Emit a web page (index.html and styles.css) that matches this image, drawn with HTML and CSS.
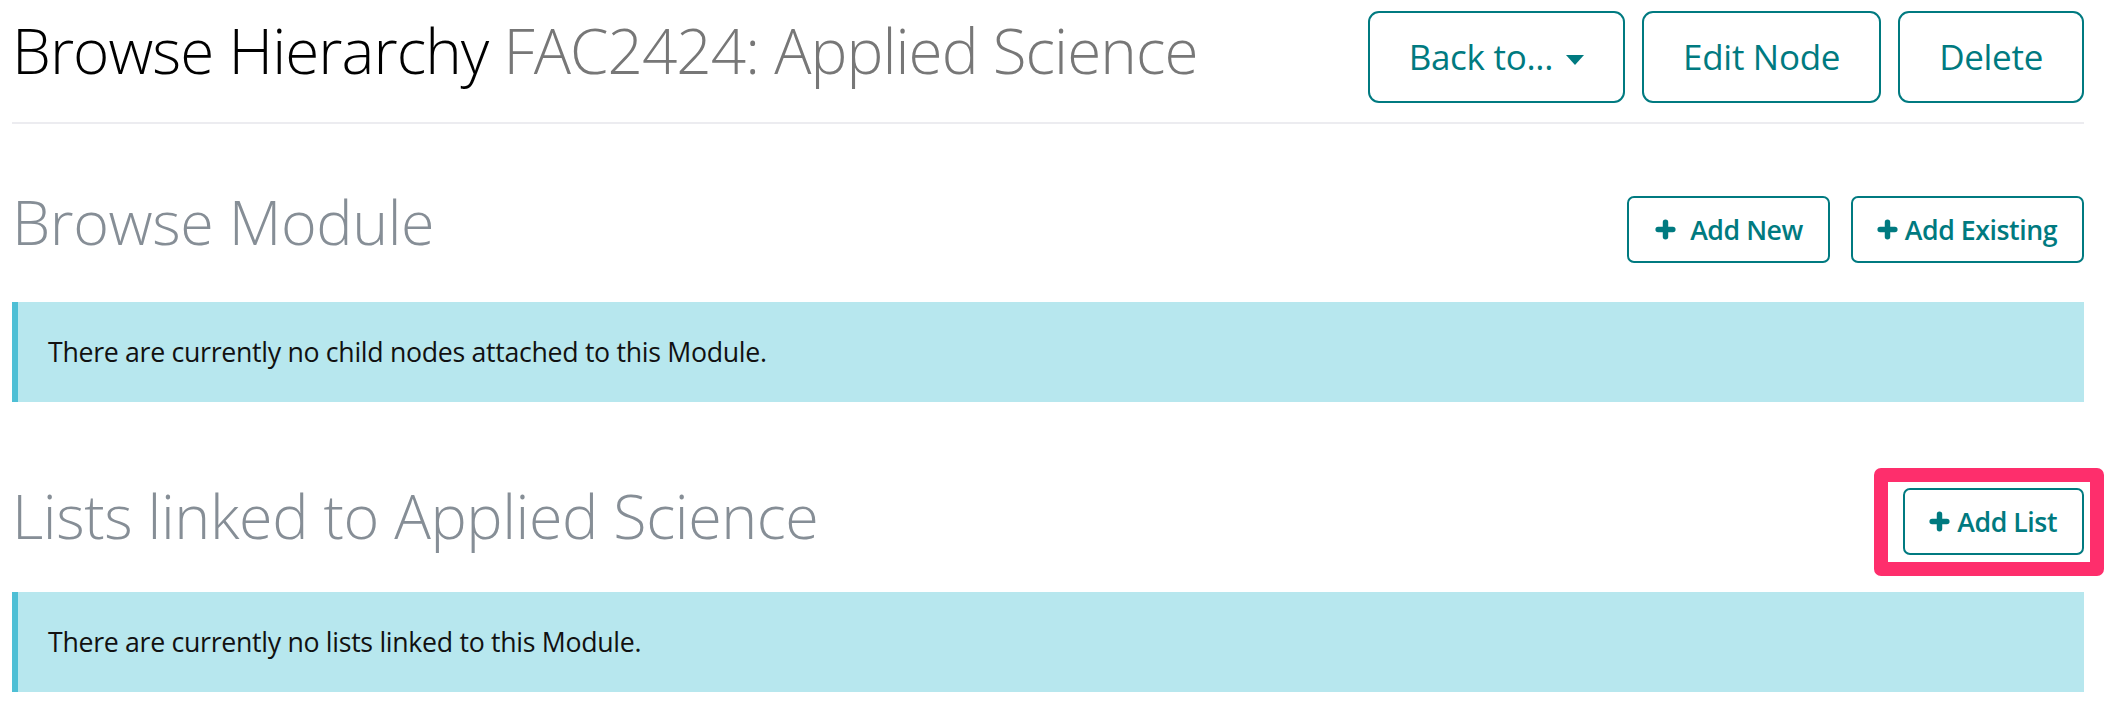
FILE: index.html
```html
<!DOCTYPE html>
<html lang="en">
<head>
<meta charset="utf-8">
<title>Browse Hierarchy</title>
<link rel="stylesheet" href="styles.css">
</head>
<body>
<div class="page">
  <header class="page-header">
    <h1 class="page-title">Browse Hierarchy <span class="subtitle">FAC2424: Applied Science</span></h1>
    <div class="btn-group">
      <button class="btn btn-lg">Back to... <span class="caret"></span></button>
      <button class="btn btn-lg">Edit Node</button>
      <button class="btn btn-lg">Delete</button>
    </div>
  </header>
  <hr class="divider">

  <section class="section section-first">
    <div class="section-head">
      <h2 class="section-title">Browse Module</h2>
      <div class="btn-group btn-group-sm">
        <button class="btn btn-sm btn-wide"><svg class="plus" viewBox="0 0 20 20"><path d="M10 3v14M3 10h14"/></svg>Add New</button>
        <button class="btn btn-sm"><svg class="plus" viewBox="0 0 20 20"><path d="M10 3v14M3 10h14"/></svg>Add Existing</button>
      </div>
    </div>
    <div class="alert">There are currently no child nodes attached to this Module.</div>
  </section>

  <section class="section section-second">
    <div class="section-head">
      <h2 class="section-title">Lists linked to Applied Science</h2>
      <div class="btn-group btn-group-sm">
        <span class="highlight-wrap">
          <button class="btn btn-sm"><svg class="plus" viewBox="0 0 20 20"><path d="M10 3v14M3 10h14"/></svg>Add List</button>
        </span>
      </div>
    </div>
    <div class="alert">There are currently no lists linked to this Module.</div>
  </section>
</div>
</body>
</html>
```

FILE: styles.css
```css
* { box-sizing: border-box; }

html, body {
  margin: 0;
  padding: 0;
  background: #fff;
}

body {
  font-family: "Open Sans", "Noto Sans", sans-serif;
  color: #111;
  overflow: hidden;
}

.page {
  padding: 0 20px 0 12px;
}

.page-header {
  display: flex;
  justify-content: space-between;
  align-items: flex-start;
  padding-top: 11px;
}

.page-title {
  margin: 2px 0 0 0;
  font-size: 62px;
  font-weight: 300;
  line-height: 74px;
  color: #000;
  letter-spacing: -0.95px;
}

.subtitle {
  color: #777;
}

.btn-group {
  display: flex;
  gap: 17px;
}

.btn {
  font-family: "Open Sans", "Noto Sans", sans-serif;
  background: #fff;
  color: #007a80;
  border: 2px solid #007a80;
  border-radius: 11px;
  display: inline-flex;
  align-items: center;
  white-space: nowrap;
  cursor: pointer;
}

.btn-lg {
  font-size: 35px;
  font-weight: 400;
  line-height: 52px;
  padding: 18px 39px;
  letter-spacing: -0.3px;
}

.caret {
  display: inline-block;
  width: 0;
  height: 0;
  margin-left: 13px;
  margin-top: 6px;
  border-top: 10px solid #007a80;
  border-left: 9px solid transparent;
  border-right: 9px solid transparent;
}

.divider {
  margin: 19px 0 0 0;
  border: 0;
  height: 2px;
  background: #ececf0;
}

.section-head {
  display: flex;
  justify-content: space-between;
  align-items: flex-start;
}

.section-first {
  margin-top: 61px;
}

.section-second {
  margin-top: 77px;
}

.section-title {
  margin: 0;
  font-size: 61px;
  font-weight: 300;
  line-height: 73px;
  color: #868e96;
  letter-spacing: -0.42px;
}

.btn-group-sm {
  margin-top: 11px;
  gap: 21px;
}

.section-second .btn-group-sm {
  margin-top: 9px;
}

.btn-sm {
  font-size: 26.7px;
  font-weight: 600;
  line-height: 41px;
  padding: 11px 25px 11px 24px;
  border-radius: 7px;
  letter-spacing: -0.45px;
}

.plus {
  width: 21px;
  height: 21px;
  margin-right: 7px;
  fill: none;
  stroke: #007a80;
  stroke-width: 5.2;
  stroke-linecap: round;
}

.btn-wide .plus {
  margin-left: 2px;
  margin-right: 14px;
}

.highlight-wrap {
  position: relative;
  display: inline-flex;
}

.highlight-wrap::after {
  content: "";
  position: absolute;
  left: -29px;
  right: -20px;
  top: -20px;
  bottom: -21px;
  border: 14px solid #fe2e6c;
  border-radius: 7px;
  pointer-events: none;
}

.alert {
  background: #b7e7ee;
  border-left: 6px solid #4ebfd5;
  font-size: 26.7px;
  line-height: 40px;
  padding: 30px 30px;
  color: #111;
  letter-spacing: -0.3px;
}

.section-first .alert {
  margin-top: 39px;
}

.section-second .alert {
  margin-top: 37px;
}
```
